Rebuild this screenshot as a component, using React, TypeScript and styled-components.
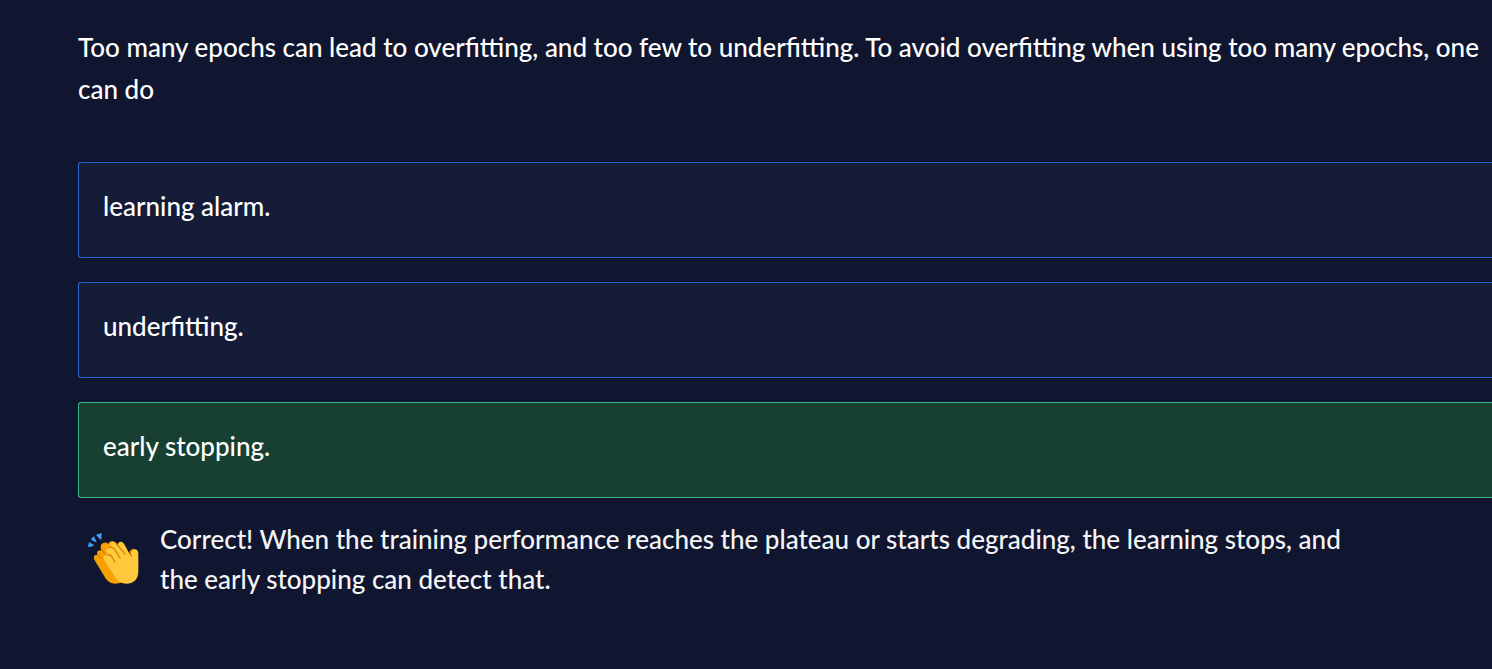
import React, { useState } from "react";
import styled, { createGlobalStyle } from "styled-components";

const GlobalStyle = createGlobalStyle`
  *, *::before, *::after { box-sizing: border-box; }
  body {
    margin: 0;
    background: #10162f;
    color: #ffffff;
    font-family: Lato, "Open Sans", sans-serif;
    font-size: 26px;
    font-weight: 500;
    line-height: 40px;
  }
`;

const Page = styled.main`
  min-height: 100vh;
  padding: 26px 0 64px 78px;
`;

const Question = styled.p`
  margin: 0 0 52px;
  line-height: 42px;
`;

const Options = styled.div`
  display: flex;
  flex-direction: column;
  gap: 24px;
`;

const Option = styled.button<{ $correct: boolean }>`
  display: flex;
  align-items: flex-start;
  width: 100%;
  min-height: 96px;
  padding: 23px 24px;
  border: 1px solid ${({ $correct }) => ($correct ? "#37b886" : "#2a5fcf")};
  border-right: 0;
  border-radius: 3px 0 0 3px;
  background: ${({ $correct }) => ($correct ? "#184032" : "#151c38")};
  color: inherit;
  font: inherit;
  text-align: left;
  cursor: pointer;
`;

const Feedback = styled.div`
  display: flex;
  align-items: flex-start;
  gap: 20px;
  padding: 21px 112px 0 10px;
`;

const ClapIcon = styled.svg`
  flex: none;
  width: 52px;
  height: 52px;
  margin-top: 14px;
`;

const Message = styled.p`
  margin: 0;
  color: #f5f5f7;
`;

const answers = ["learning alarm.", "underfitting.", "early stopping."];
const correctAnswer = "early stopping.";

function Clap() {
  return (
    <ClapIcon viewBox="23 23 156 156" role="img" aria-label="Clapping hands">
      <g fill="#3f9ff5">
        <path d="M23 65 L26 50 L42 60 Q33 66 23 65Z" />
        <path d="M31 42 L41 33 L49 51 Q38 49 31 42Z" />
        <path d="M47 28 L64 23 L63 44 Q53 37 47 28Z" />
      </g>
      <path
        fill="#f8a000"
        d="M42 103 C38 94 44 87 52 90 C47 80 53 73 62 76 L62 69 C60 60 63 53 73 52 C78 51 82 53 85 57 C84 50 90 47 97 48 C105 49 108 54 112 60 L140 155 C132 170 120 175 105 175 C91 175 82 168 75 158Z"
      />
      <path
        fill="#ffc83d"
        d="M71 103 C67 90 79 84 86 91 L78 79 C74 67 88 60 97 70 L89 58 C90 47 102 46 110 57 L113 61 C111 49 124 44 132 57 L149 88 C147 77 155 70 165 72 C172 74 174 79 174 87 L174 139 C174 163 158 175 138 175 C125 175 113 169 106 158Z"
      />
      <g fill="none" stroke="#d98205" strokeWidth="4" strokeLinecap="round" strokeLinejoin="round">
        <path d="M52 90 Q58 91 62 98" />
        <path d="M62 70 L74 86" />
        <path d="M82 89 Q89 86 94 94 L104 110" />
        <path d="M84 68 Q96 61 103 72 L119 98" />
        <path d="M107 54 L135 87" />
        <path d="M153 92 L149 84 Q149 75 158 72" />
      </g>
    </ClapIcon>
  );
}

export default function App() {
  const [selected, setSelected] = useState(correctAnswer);

  return (
    <>
      <GlobalStyle />
      <Page>
        <Question id="question">
          Too many epochs can lead to overfitting, and too few to underfitting. To avoid overfitting when using too many
          epochs, one can do
        </Question>
        <Options role="group" aria-labelledby="question">
          {answers.map((answer) => (
            <Option
              key={answer}
              type="button"
              aria-pressed={answer === selected}
              $correct={answer === selected && answer === correctAnswer}
              onClick={() => setSelected(answer)}
            >
              {answer}
            </Option>
          ))}
        </Options>
        {selected === correctAnswer && (
          <Feedback role="status">
            <Clap />
            <Message>
              Correct! When the training performance reaches the plateau or starts degrading, the learning stops, and
              the early stopping can detect that.
            </Message>
          </Feedback>
        )}
      </Page>
    </>
  );
}
